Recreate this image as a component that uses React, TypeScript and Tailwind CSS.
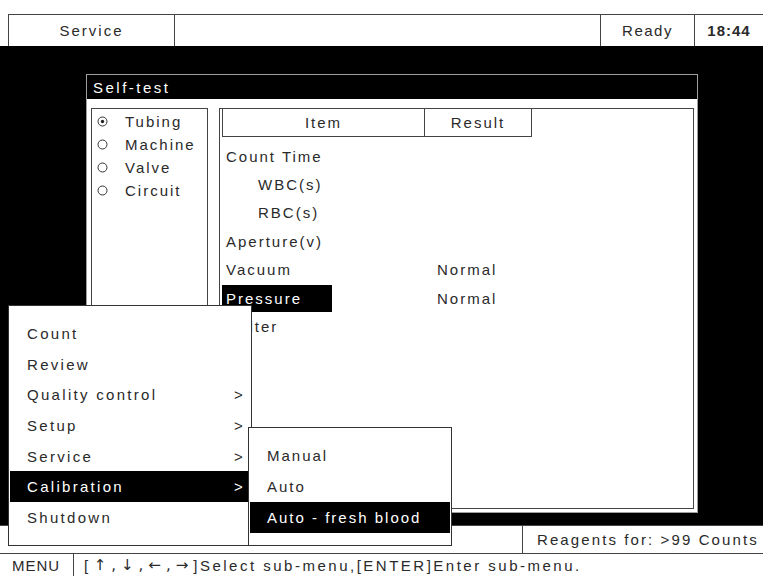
const MENU = [
  { label: "Count", sub: false },
  { label: "Review", sub: false },
  { label: "Quality control", sub: true },
  { label: "Setup", sub: true },
  { label: "Service", sub: true },
  { label: "Calibration", sub: true, active: true },
  { label: "Shutdown", sub: false },
];

const SUBMENU = ["Manual", "Auto", "Auto - fresh blood"];

const TESTS = ["Tubing", "Machine", "Valve", "Circuit"];

const ROWS = [
  { item: "Count Time", result: "", pad: "pl-[4px]" },
  { item: "WBC(s)", result: "", pad: "pl-[36px]" },
  { item: "RBC(s)", result: "", pad: "pl-[36px]" },
  { item: "Aperture(v)", result: "", pad: "pl-[4px]" },
  { item: "Vacuum", result: "Normal", pad: "pl-[4px]" },
  { item: "Pressure", result: "Normal", pad: "pl-[4px]", active: true },
  { item: "Filter", result: "", pad: "pl-[11px]" },
];

function Radio({ checked }: { checked?: boolean }) {
  return (
    <svg width="11" height="11" viewBox="0 0 11 11" className="shrink-0">
      <circle cx="5.5" cy="5.5" r="4.5" fill="none" stroke="#333" strokeWidth="1" />
      {checked && <circle cx="5.5" cy="5.5" r="1.7" fill="#222" />}
    </svg>
  );
}

function TopBar() {
  return (
    <div className="flex h-[32px] ml-[8px] border-t border-l border-[#444]">
      <div className="w-[166px] border-r border-[#444] flex items-center justify-center">Service</div>
      <div className="flex-1 border-r border-[#444]" />
      <div className="w-[94px] border-r border-[#444] flex items-center justify-center tracking-[1.5px]">Ready</div>
      <div className="w-[68px] flex items-center justify-center font-bold tracking-[1px]">18:44</div>
    </div>
  );
}

function SelfTest() {
  return (
    <div className="w-[612px] h-[439px] border border-[#a0a0a0] bg-white flex flex-col">
      <div className="h-[24px] bg-black text-white pl-[6px] flex items-center tracking-[2.5px]">Self-test</div>
      <div className="flex-1 flex pt-[9px] pl-[4px] pr-[3px] pb-[3px] gap-[11px]">
        <div className="w-[117px] border border-[#444] pt-[1px]">
          {TESTS.map((t, i) => (
            <div key={t} className="h-[23px] flex items-center pl-[5px] gap-[17px]">
              <Radio checked={i === 0} />
              <span>{t}</span>
            </div>
          ))}
        </div>
        <div className="flex-1 border border-[#444] pl-[2px]">
          <div className="flex -mt-px">
            <div className="w-[203px] h-[29px] border border-[#444] flex items-center justify-center">Item</div>
            <div className="w-[107px] h-[29px] border border-l-0 border-[#444] flex items-center justify-center">
              Result
            </div>
          </div>
          <div className="mt-[5px]">
            {ROWS.map((r) => (
              <div key={r.item} className="h-[28.4px] flex items-center">
                <div className="w-[215px]">
                  <span
                    className={`flex items-center h-[27px] w-[110px] whitespace-nowrap ${r.pad} ${
                      r.active ? "bg-black text-white" : ""
                    }`}
                  >
                    {r.item}
                  </span>
                </div>
                <span>{r.result}</span>
              </div>
            ))}
          </div>
        </div>
      </div>
    </div>
  );
}

function MainMenu() {
  return (
    <div className="absolute left-[8px] top-[305px] w-[244px] h-[241px] border border-[#333] bg-white pt-[12px] px-[1px] tracking-[2.3px]">
      {MENU.map((m) => (
        <div
          key={m.label}
          className={`h-[30.7px] flex items-center justify-between pl-[17px] pr-[5px] ${
            m.active ? "bg-black text-white" : ""
          }`}
        >
          <span>{m.label}</span>
          {m.sub && <span>&gt;</span>}
        </div>
      ))}
    </div>
  );
}

function SubMenu() {
  return (
    <div className="absolute left-[248px] top-[427px] w-[204px] h-[119px] border border-[#333] bg-white pt-[12px] px-[1px]">
      {SUBMENU.map((s, i) => (
        <div
          key={s}
          className={`h-[31px] flex items-center pl-[17px] ${i === 2 ? "bg-black text-white" : ""}`}
        >
          {s}
        </div>
      ))}
    </div>
  );
}

export default function App() {
  return (
    <div className="relative w-[763px] h-[576px] overflow-hidden bg-white text-[15px] leading-none tracking-[2px] text-[#2a2a2a] font-['Liberation_Sans',Arial,sans-serif]">
      <div className="h-[14px]" />
      <TopBar />
      <div className="h-[479px] bg-black pl-[86px] pt-[28px]">
        <SelfTest />
      </div>
      <div className="flex h-[28px] border-t border-[#444]">
        <div className="w-[523px] border-r border-[#444]" />
        <div className="flex-1 flex items-center pl-[14px] whitespace-nowrap tracking-[2.1px]">
          Reagents for: &gt;99 Counts
        </div>
      </div>
      <div className="flex h-[23px] border-t border-[#444] whitespace-nowrap">
        <div className="w-[74px] border-r border-[#444] flex items-center pl-[12px] tracking-[1px]">MENU</div>
        <div className="flex items-center pl-[10px] tracking-[2.5px]">
          [<span className="font-['DejaVu_Sans',sans-serif] tracking-[5px] pl-[3px]">↑,↓,←,→</span>]Select
          sub-menu,[ENTER]Enter sub-menu.
        </div>
      </div>
      <MainMenu />
      <SubMenu />
    </div>
  );
}
